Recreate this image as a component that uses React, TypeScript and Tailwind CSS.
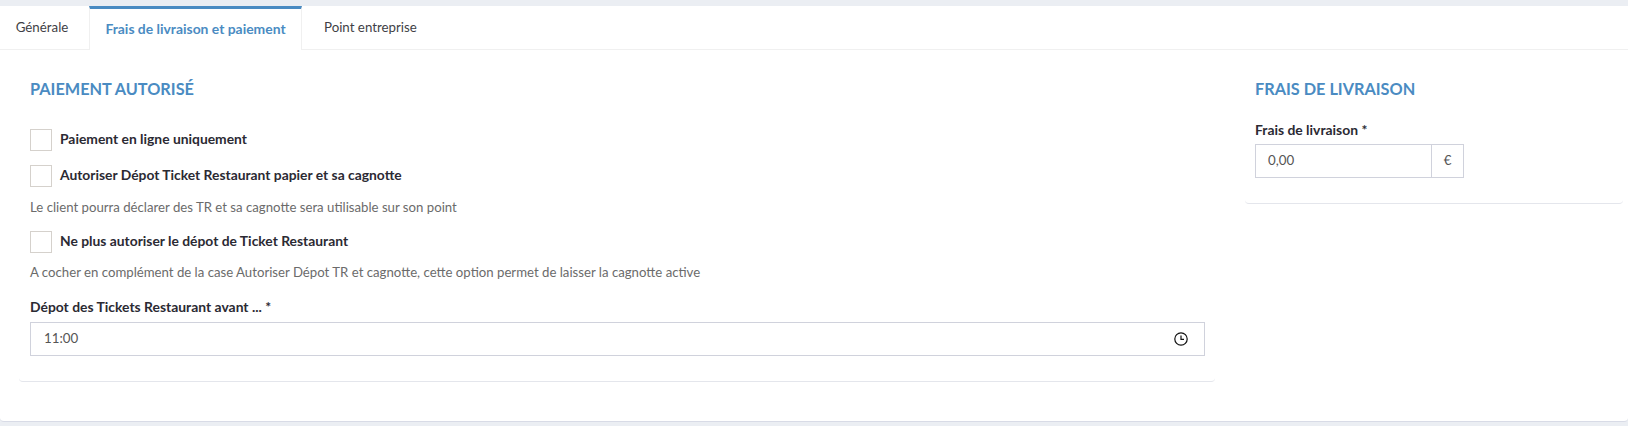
import React from "react";

function Check({ label, className }: { label: string; className: string }) {
  return (
    <label className={`flex items-center gap-2 ${className}`}>
      <span className="h-[22px] w-[22px] shrink-0 border border-[#d5d1cc] bg-white" />
      <span className="-translate-y-px text-[13.85px] font-bold leading-[22px] text-[#2b2a33]">{label}</span>
    </label>
  );
}

function Help({ text, className }: { text: string; className: string }) {
  return <p className={`text-[13.2px] leading-[18px] text-[#6b6b6b] ${className}`}>{text}</p>;
}

export default function App() {
  return (
    <div className="h-[426px] w-[1628px] overflow-hidden bg-[#ebeef3] pt-[6px] font-['Lato',sans-serif]">
      <div className="h-[416px] rounded-b border-b border-[#d8dbe6] bg-white">
        <div className="flex h-[44px] border-b border-[#f0f0f0] text-[13.3px]">
          <div className="flex w-[89px] items-center justify-center pr-[5px] text-[#3f3f46]">Générale</div>
          <div className="-mb-px flex w-[213px] items-center justify-center border-x border-t-[3px] border-x-[#f0f0f0] border-t-[#4a8bc2] bg-white text-[13.9px] font-bold text-[#4a8bc2]">
            Frais de livraison et paiement
          </div>
          <div className="flex items-center pl-[22px] text-[#3f3f46]">Point entreprise</div>
        </div>
        <div className="flex gap-[30px] pl-[19px] pr-[5px] pt-[20px]">
          <section className="h-[312px] w-[1196px] rounded border-b border-[#e4e6ec] pl-[11px] pr-[10px] pt-[8px]">
            <h2 className="text-[16.3px] font-bold leading-[22px] text-[#4a8bc2]">PAIEMENT AUTORISÉ</h2>
            <Check label="Paiement en ligne uniquement" className="mt-[29px]" />
            <Check label="Autoriser Dépot Ticket Restaurant papier et sa cagnotte" className="mt-[14px]" />
            <Help text="Le client pourra déclarer des TR et sa cagnotte sera utilisable sur son point" className="mt-[11px]" />
            <Check label="Ne plus autoriser le dépot de Ticket Restaurant" className="mt-[15px]" />
            <Help text="A cocher en complément de la case Autoriser Dépot TR et cagnotte, cette option permet de laisser la cagnotte active" className="mt-[10px]" />
            <div className="mt-[17px] text-[13.9px] font-bold leading-[18px] text-[#2b2a33]">Dépot des Tickets Restaurant avant ... *</div>
            <div className="mt-[6px] flex h-[34px] items-center justify-between border border-[#d0d2dc] pl-[13px] pr-[16px] text-[13.3px] text-[#555]">
              <span>11:00</span>
              <svg width="14" height="14" viewBox="0 0 14 14" fill="none" stroke="#111" strokeWidth="1.2">
                <circle cx="7" cy="7" r="6.2" />
                <path d="M7 3.5V7.4H10" />
              </svg>
            </div>
          </section>
          <section className="h-[134px] w-[378px] rounded border-b border-[#e4e6ec] pl-[10px] pt-[8px]">
            <h2 className="text-[16.3px] font-bold leading-[22px] text-[#4a8bc2]">FRAIS DE LIVRAISON</h2>
            <div className="mt-[21px] text-[13.9px] font-bold leading-[18px] text-[#2b2a33]">Frais de livraison *</div>
            <div className="mt-[5px] flex h-[34px] w-[209px] items-center border border-[#d0d2dc] text-[13.3px] text-[#555]">
              <span className="flex-1 pl-[12px]">0,00</span>
              <span className="flex h-full w-[32px] items-center justify-center border-l border-[#d0d2dc]">€</span>
            </div>
          </section>
        </div>
      </div>
    </div>
  );
}
